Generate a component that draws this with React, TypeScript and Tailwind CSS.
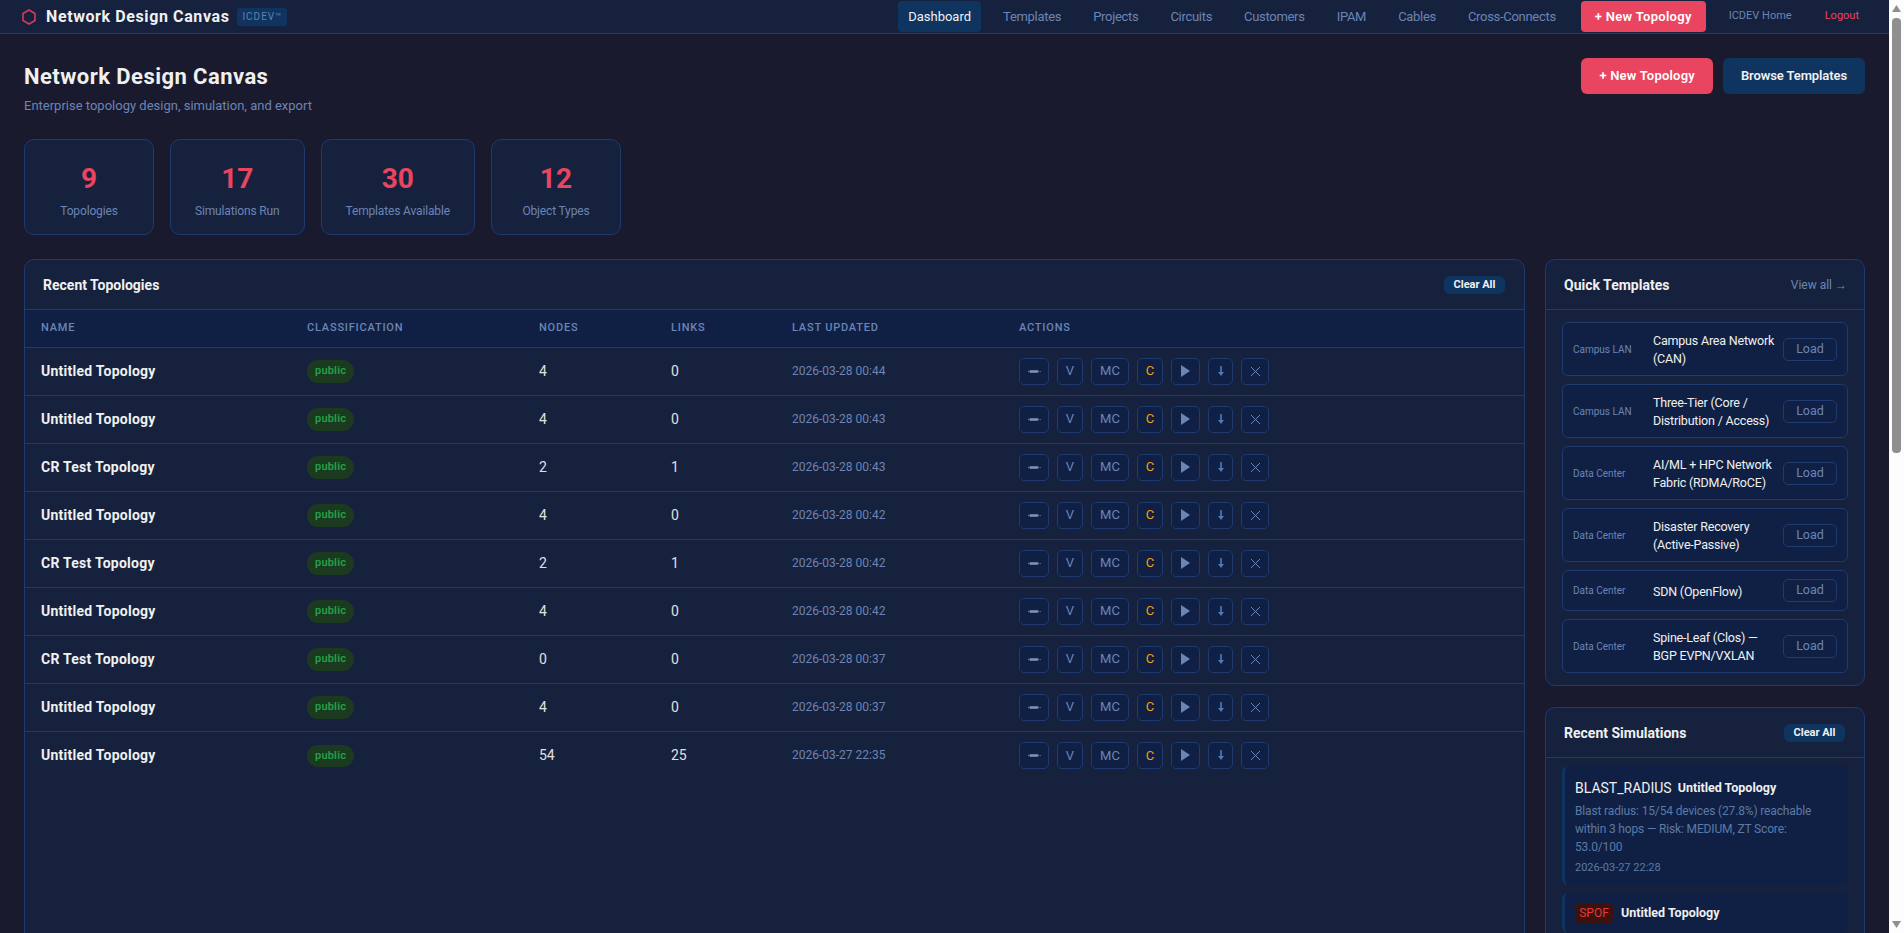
const FONT = "font-['Segoe_UI','Roboto',sans-serif]";

const NAV = ["Templates", "Projects", "Circuits", "Customers", "IPAM", "Cables", "Cross-Connects"];

const STATS = [
  { value: "9", label: "Topologies" },
  { value: "17", label: "Simulations Run" },
  { value: "30", label: "Templates Available" },
  { value: "12", label: "Object Types" },
];

const TOPOLOGIES = [
  { name: "Untitled Topology", nodes: 4, links: 0, updated: "2026-03-28 00:44" },
  { name: "Untitled Topology", nodes: 4, links: 0, updated: "2026-03-28 00:43" },
  { name: "CR Test Topology", nodes: 2, links: 1, updated: "2026-03-28 00:43" },
  { name: "Untitled Topology", nodes: 4, links: 0, updated: "2026-03-28 00:42" },
  { name: "CR Test Topology", nodes: 2, links: 1, updated: "2026-03-28 00:42" },
  { name: "Untitled Topology", nodes: 4, links: 0, updated: "2026-03-28 00:42" },
  { name: "CR Test Topology", nodes: 0, links: 0, updated: "2026-03-28 00:37" },
  { name: "Untitled Topology", nodes: 4, links: 0, updated: "2026-03-28 00:37" },
  { name: "Untitled Topology", nodes: 54, links: 25, updated: "2026-03-27 22:35" },
];

const TEMPLATES = [
  { cat: "Campus LAN", name: "Campus Area Network\n(CAN)" },
  { cat: "Campus LAN", name: "Three-Tier (Core /\nDistribution / Access)" },
  { cat: "Data Center", name: "AI/ML + HPC Network\nFabric (RDMA/RoCE)" },
  { cat: "Data Center", name: "Disaster Recovery\n(Active-Passive)" },
  { cat: "Data Center", name: "SDN (OpenFlow)" },
  { cat: "Data Center", name: "Spine-Leaf (Clos) —\nBGP EVPN/VXLAN" },
];

function ActionButton({ children, className = "" }: { children: React.ReactNode; className?: string }) {
  return (
    <button className={`flex h-[27px] items-center justify-center rounded-[5px] border border-[#1e3a6e] bg-[#0f2044] text-[13px] ${className}`}>
      {children}
    </button>
  );
}

function Actions() {
  return (
    <div className="flex gap-2">
      <ActionButton className="w-[30px]">
        <svg width="13" height="3" viewBox="0 0 13 3">
          <rect x="0" y="0.75" width="2" height="1.5" fill="#4f6d9c" />
          <rect x="2" y="0.25" width="8" height="2.5" fill="#7e93c0" />
          <rect x="10" y="0.75" width="1" height="1.5" fill="#5f5a7a" />
          <rect x="11.5" y="1" width="1.5" height="1" fill="#5c6080" />
        </svg>
      </ActionButton>
      <ActionButton className="w-[26px] text-[#6b85b5]">V</ActionButton>
      <ActionButton className="w-[38px] text-[#6b85b5]">MC</ActionButton>
      <ActionButton className="w-[26px] text-[#f39c12]">C</ActionButton>
      <ActionButton className="w-[29px]">
        <svg width="9" height="12" viewBox="0 0 9 12">
          <path d="M0 0 L9 6 L0 12 Z" fill="#6b85b5" />
        </svg>
      </ActionButton>
      <ActionButton className="w-[25px]">
        <svg width="6" height="10" viewBox="0 0 6 10">
          <path d="M2.2 0 H3.8 V6 H6 L3 10 L0 6 H2.2 Z" fill="#4f7cb8" />
        </svg>
      </ActionButton>
      <ActionButton className="w-[28px]">
        <svg width="11" height="11" viewBox="0 0 11 11">
          <path d="M1 1 L10 10 M10 1 L1 10" stroke="#6b85b5" strokeWidth="1" />
        </svg>
      </ActionButton>
    </div>
  );
}

// the reference shows the browser's classic scrollbar
function Scrollbar() {
  return (
    <div className="flex w-[15px] shrink-0 flex-col items-center bg-[#fdfdfd]">
      <svg width="9" height="7" viewBox="0 0 9 7" className="mt-[5px] shrink-0">
        <path d="M4.5 0 L9 7 H0 Z" fill="#8f8f8f" />
      </svg>
      <div className="mt-[6px] h-[435px] w-[9px] rounded-[4px] bg-[#8f8f8f]" />
      <svg width="9" height="7" viewBox="0 0 9 7" className="mt-auto mb-[5px] shrink-0">
        <path d="M0 0 H9 L4.5 7 Z" fill="#8f8f8f" />
      </svg>
    </div>
  );
}

export default function App() {
  return (
    <div className={`${FONT} flex h-screen overflow-hidden bg-[#1a1a2e] text-[14px] text-[#e0e0e0]`}>
      <div className="min-w-0 flex-1 overflow-hidden">
        <nav className="flex h-[34px] items-center justify-between border-b border-[#1e3a6e] bg-[#16213e] pr-[30px] pl-[22px]">
          <div className="flex items-center">
            <svg width="14" height="16" viewBox="0 0 14 16" className="mr-[10px]">
              <path d="M7 1 L13 4.5 V11.5 L7 15 L1 11.5 V4.5 Z" fill="none" stroke="#d63a56" strokeWidth="1.6" />
            </svg>
            <span className="text-[16px] font-bold tracking-[0.6px] text-[#f0f0f0]">Network Design Canvas</span>
            <span className="ml-2 flex h-[18px] w-[50px] items-center justify-center rounded-[3px] bg-[#0f3460] text-[10px] tracking-[1px] text-[#5f82ad]">ICDEV™</span>
          </div>
          <div className="flex items-center">
            <a className="flex h-[31px] items-center rounded-[4px] bg-[#0f3460] px-[10px] text-[13px] text-[#f0f0f0]">Dashboard</a>
            {NAV.map((n) => (
              <a key={n} className="ml-[12px] flex h-[31px] items-center px-[10px] text-[13px] tracking-[-0.3px] text-[#6b85b5]">{n}</a>
            ))}
            <a className="ml-[15px] flex h-[31px] items-center rounded-[4px] bg-[#e94560] px-[14px] text-[13px] font-semibold tracking-[0.3px] text-white">+ New Topology</a>
            <a className="ml-[23px] text-[11px] text-[#6b85b5]">ICDEV Home</a>
            <a className="ml-[33px] text-[11px] text-[#e94560]">Logout</a>
          </div>
        </nav>

        <main className="px-6 pt-6">
          <div className="flex items-start justify-between">
            <div>
              <h1 className="mt-px text-[22px] leading-[36px] font-bold tracking-[0.45px] text-[#f0f0f0]">Network Design Canvas</h1>
              <p className="mt-px text-[13px] leading-[19px] text-[#6b85b5]">Enterprise topology design, simulation, and export</p>
            </div>
            <div className="flex gap-[10px]">
              <button className="h-9 rounded-[6px] bg-[#e94560] px-[18px] text-[13px] font-semibold tracking-[0.2px] text-white">+ New Topology</button>
              <button className="h-9 rounded-[6px] bg-[#0f3460] px-[18px] text-[13px] font-semibold tracking-[-0.1px] text-[#f0f0f0]">Browse Templates</button>
            </div>
          </div>

          <div className="mt-[24px] flex gap-4">
            {STATS.map((s) => (
              <div key={s.label} className="h-[96px] min-w-[130px] rounded-[10px] border border-[#1e3a6e] bg-[#16213e] px-6 pt-[21px] text-center">
                <div className="text-[28px] leading-[36px] font-bold text-[#e94560]">{s.value}</div>
                <div className="mt-[6px] text-[12px] leading-[17px] tracking-[-0.15px] text-[#6b85b5]">{s.label}</div>
              </div>
            ))}
          </div>

          <div className="mt-6 grid grid-cols-[1fr_320px] items-stretch gap-5">
            <section className="rounded-[10px] border border-[#1e3a6e] bg-[#16213e]">
              <div className="flex h-[50px] items-center justify-between border-b border-[#1e3a6e] pt-px pr-[19px] pl-[18px]">
                <h2 className="text-[14px] font-bold text-[#f0f0f0]">Recent Topologies</h2>
                <button className="flex h-[18px] w-[61px] items-center justify-center rounded-[6px] bg-[#0f3460] text-[11px] font-bold text-[#f0f0f0]">Clear All</button>
              </div>
              <table className="w-full table-fixed text-left">
                <thead className="bg-[#0f2044]">
                  <tr className="h-[37px] border-b border-[#1e3a6e] text-[11px] tracking-[0.8px] text-[#6b85b5]">
                    <th className="w-[266px] pl-4 font-medium">NAME</th>
                    <th className="w-[232px] pl-4 font-medium">CLASSIFICATION</th>
                    <th className="w-[132px] pl-4 font-medium">NODES</th>
                    <th className="w-[121px] pl-4 font-medium">LINKS</th>
                    <th className="w-[227px] pl-4 font-medium">LAST UPDATED</th>
                    <th className="pl-4 font-medium">ACTIONS</th>
                  </tr>
                </thead>
                <tbody>
                  {TOPOLOGIES.map((t, i) => (
                    <tr key={i} className={`h-[48px] ${i < TOPOLOGIES.length - 1 ? "border-b border-[#1e3a6e]" : ""}`}>
                      <td className="pl-4 text-[14px] font-bold tracking-[0.25px] text-[#f0f0f0]">{t.name}</td>
                      <td className="pl-4">
                        <span className="inline-block rounded-full bg-[#1c3a20] px-2 py-[3px] text-[11px] font-semibold tracking-[0.2px] text-[#22a04a]">public</span>
                      </td>
                      <td className="pl-4 text-[14px]">{t.nodes}</td>
                      <td className="pl-4 text-[14px]">{t.links}</td>
                      <td className="pl-4 text-[12px] text-[#6b85b5]">{t.updated}</td>
                      <td className="pl-4"><Actions /></td>
                    </tr>
                  ))}
                </tbody>
              </table>
            </section>

            <aside className="flex flex-col gap-[21px]">
              <section className="rounded-[10px] border border-[#1e3a6e] bg-[#16213e]">
                <div className="flex h-[50px] items-center justify-between border-b border-[#1e3a6e] pt-px pr-[17px] pl-[18px]">
                  <h2 className="text-[14px] font-bold text-[#f0f0f0]">Quick Templates</h2>
                  <a className="text-[12px] text-[#6b85b5]">View all →</a>
                </div>
                <div className="flex flex-col gap-2 px-4 py-3">
                  {TEMPLATES.map((t) => (
                    <div key={t.name} className="flex items-center rounded-[6px] border border-[#1e3a6e] bg-[#0f2044] py-2 pr-[10px] pl-[10px]">
                      <span className="w-[80px] shrink-0 text-[10px] text-[#6b85b5]">{t.cat}</span>
                      <span className="flex-1 translate-y-px text-[12.5px] leading-[18px] tracking-[-0.2px] whitespace-pre-line text-[#f0f0f0]">{t.name}</span>
                      <button className="flex h-[23px] w-[54px] items-center justify-center rounded-[5px] border border-[#1e3a6e] text-[12.5px] text-[#6b85b5]">Load</button>
                    </div>
                  ))}
                </div>
              </section>

              <section className="min-h-[900px] rounded-[10px] border border-[#1e3a6e] bg-[#16213e]">
                <div className="flex h-[50px] items-center justify-between border-b border-[#1e3a6e] pt-px pr-[19px] pl-[18px]">
                  <h2 className="text-[14px] font-bold text-[#f0f0f0]">Recent Simulations</h2>
                  <button className="flex h-[18px] w-[61px] items-center justify-center rounded-[6px] bg-[#0f3460] text-[11px] font-bold text-[#f0f0f0]">Clear All</button>
                </div>
                <div className="flex flex-col gap-2 px-4 pt-2">
                  <div className="h-[119px] rounded-[6px] border-l-[3px] border-[#0f3460] bg-[#0f2044] pt-[11px] pl-[10px]">
                    <div className="flex h-[22px] items-center gap-[6px]">
                      <span className="text-[14px] text-[#f0f0f0]">BLAST_RADIUS</span>
                      <span className="text-[12.5px] font-bold text-[#f0f0f0]">Untitled Topology</span>
                    </div>
                    <p className="mt-[3px] text-[12px] leading-[18px] tracking-[-0.15px] whitespace-pre-line text-[#5c7aa6]">
                      {"Blast radius: 15/54 devices (27.8%) reachable\nwithin 3 hops — Risk: MEDIUM, ZT Score:\n53.0/100"}
                    </p>
                    <p className="mt-[4px] text-[11px] text-[#5c7aa6]">2026-03-27 22:28</p>
                  </div>
                  <div className="rounded-[6px] border-l-[3px] border-[#0f3460] bg-[#0f2044] pt-[10px] pb-[10px] pl-[10px]">
                    <div className="flex h-[20px] items-center gap-2">
                      <span className="flex h-[20px] w-[38px] items-center justify-center rounded-[3px] bg-[#3a1212] text-[12px] text-[#e53935]">SPOF</span>
                      <span className="text-[12.5px] font-bold text-[#f0f0f0]">Untitled Topology</span>
                    </div>
                  </div>
                </div>
              </section>
            </aside>
          </div>
        </main>
      </div>
      <Scrollbar />
    </div>
  );
}
